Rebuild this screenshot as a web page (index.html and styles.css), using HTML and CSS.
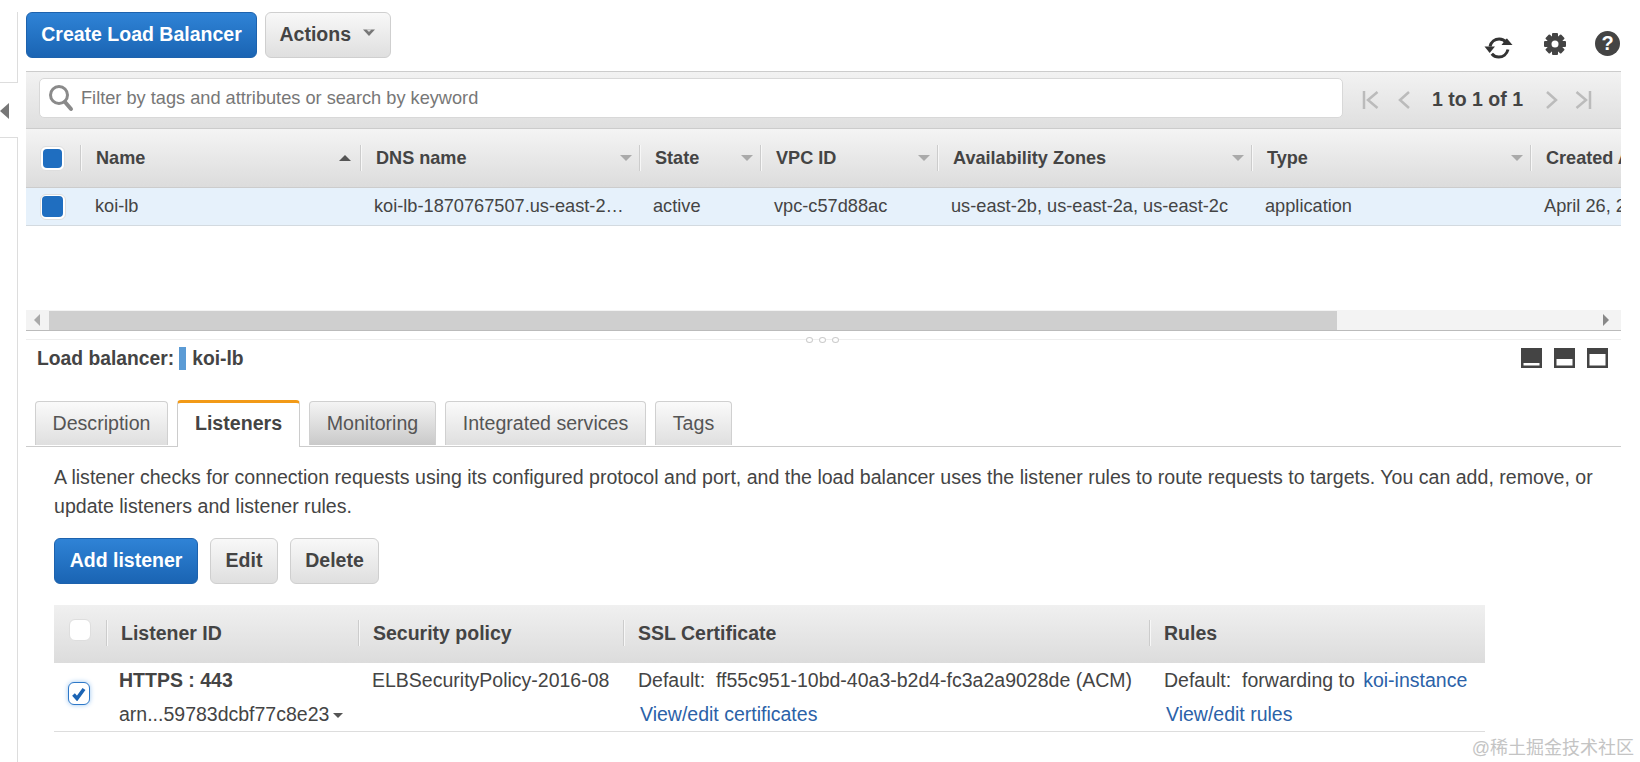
FILE: index.html
```html
<!DOCTYPE html>
<html lang="en">
<head>
<meta charset="utf-8">
<title>Load Balancers</title>
<link rel="stylesheet" href="styles.css">
</head>
<body>
<div class="page">
  <aside class="rail">
    <div class="rail-top"></div>
    <div class="rail-toggle"><span class="rail-arrow"></span></div>
    <div class="rail-bottom"></div>
  </aside>
  <main class="main">
    <div class="topbar">
      <div class="btn-row">
        <button class="btn btn-primary btn-create">Create Load Balancer</button>
        <button class="btn btn-actions">Actions
          <svg class="caret" width="14" height="9" viewBox="0 0 14 9"><path d="M1 1.500h12L7 8z" fill="#777"/><path d="M4.500 1.500h5L7 4z" fill="#ddd"/></svg>
        </button>
      </div>
      <div class="tools">
        <svg class="tool-refresh" width="30" height="26" viewBox="0 0 30 26">
          <path d="M6 11.500C7.200 6.800 11 4 15.200 4c3 0 5.400 1.300 7 3.300" fill="none" stroke="#333" stroke-width="3"/>
          <path d="M18.500 10h11L24 3.500 23 4z" fill="#333" transform="translate(-1 0)"/>
          <path d="M24 14.500C22.800 19.200 19 22 14.800 22c-3 0-5.400-1.300-7-3.300" fill="none" stroke="#333" stroke-width="3"/>
          <path d="M0.500 11.500h10.500L5.700 18z" fill="#333"/>
        </svg>
        <svg class="tool-gear" width="24" height="24" viewBox="0 0 24 24">
          <g fill="#444">
            <circle cx="12" cy="12" r="8"/>
            <rect x="9" y="1" width="6" height="22" rx="1"/>
            <rect x="9" y="1" width="6" height="22" rx="1" transform="rotate(45 12 12)"/>
            <rect x="9" y="1" width="6" height="22" rx="1" transform="rotate(90 12 12)"/>
            <rect x="9" y="1" width="6" height="22" rx="1" transform="rotate(135 12 12)"/>
          </g>
          <circle cx="12" cy="12" r="3.500" fill="#fff"/>
        </svg>
        <span class="tool-help">?</span>
      </div>
    </div>

    <div class="toolbar">
      <div class="search">
        <svg class="search-icon" width="26" height="28" viewBox="0 0 26 28">
          <circle cx="11" cy="11" r="8.500" fill="#fff" stroke="#8a8a8a" stroke-width="3"/>
          <path d="M17 18l6 7" stroke="#8a8a8a" stroke-width="4" stroke-linecap="round"/>
        </svg>
        <span class="placeholder">Filter by tags and attributes or search by keyword</span>
      </div>
      <div class="pager">
        <svg class="pg pg-first" width="18" height="20" viewBox="0 0 18 20"><path d="M2 1v18M15.500 2L6 10l9.500 8" fill="none" stroke="#bbb" stroke-width="2.500"/></svg>
        <svg class="pg pg-prev" width="14" height="20" viewBox="0 0 14 20"><path d="M12 2L3 10l9 8" fill="none" stroke="#bbb" stroke-width="2.500"/></svg>
        <span class="pg-text">1 to 1 of 1</span>
        <svg class="pg pg-next" width="14" height="20" viewBox="0 0 14 20"><path d="M2 2l9 8-9 8" fill="none" stroke="#bbb" stroke-width="2.500"/></svg>
        <svg class="pg pg-last" width="18" height="20" viewBox="0 0 18 20"><path d="M16 1v18M2.500 2L12 10l-9.500 8" fill="none" stroke="#bbb" stroke-width="2.500"/></svg>
      </div>
    </div>

    <div class="lb-table">
      <div class="lb-grid lb-head">
        <div class="cell-check"><span class="check check-fill"><i></i></span></div>
        <div class="hcell"><span>Name</span><b class="sort sort-up"></b></div>
        <div class="hcell"><span>DNS name</span><b class="sort"></b></div>
        <div class="hcell"><span>State</span><b class="sort"></b></div>
        <div class="hcell"><span>VPC ID</span><b class="sort"></b></div>
        <div class="hcell"><span>Availability Zones</span><b class="sort"></b></div>
        <div class="hcell"><span>Type</span><b class="sort"></b></div>
        <div class="hcell"><span>Created At</span></div>
      </div>
      <div class="lb-grid lb-row">
        <div class="cell-check"><span class="check check-fill check-row"><i></i></span></div>
        <div class="rcell rcell-name">koi-lb</div>
        <div class="rcell">koi-lb-1870767507.us-east-2…</div>
        <div class="rcell">active</div>
        <div class="rcell">vpc-c57d88ac</div>
        <div class="rcell">us-east-2b, us-east-2a, us-east-2c</div>
        <div class="rcell">application</div>
        <div class="rcell">April 26, 2018</div>
      </div>
      <div class="lb-empty"></div>
      <div class="hscroll">
        <span class="hs-left"></span>
        <span class="hs-thumb"></span>
        <span class="hs-track"></span>
        <span class="hs-right"></span>
      </div>
    </div>

    <section class="detail">
      <div class="detail-bar">
        <span class="dots"><i></i><i></i><i></i></span>
        <div class="lb-title">Load balancer:<span class="lb-mark"></span>koi-lb</div>
        <div class="panes">
          <svg width="21" height="20" viewBox="0 0 21 20"><rect width="21" height="20" fill="#444"/><rect x="2.500" y="15" width="16" height="2.500" fill="#fff"/></svg>
          <svg width="21" height="20" viewBox="0 0 21 20"><rect width="21" height="20" fill="#444"/><rect x="2.500" y="11" width="16" height="6.500" fill="#fff"/></svg>
          <svg width="21" height="20" viewBox="0 0 21 20"><rect width="21" height="20" fill="#444"/><rect x="2.500" y="6" width="16" height="11.500" fill="#fff"/></svg>
        </div>
      </div>

      <nav class="tabs">
        <span class="tab tab-description">Description</span>
        <span class="tab tab-active">Listeners</span>
        <span class="tab tab-dark tab-monitoring">Monitoring</span>
        <span class="tab tab-integrated">Integrated services</span>
        <span class="tab tab-tags">Tags</span>
      </nav>

      <div class="pane">
        <p class="intro">A listener checks for connection requests using its configured protocol and port, and the load balancer uses the listener rules to route requests to targets. You can add, remove, or update listeners and listener rules.</p>
        <div class="btn-row btn-row-pane">
          <button class="btn btn-primary btn-add">Add listener</button>
          <button class="btn btn-edit">Edit</button>
          <button class="btn btn-delete">Delete</button>
        </div>
        <div class="ls-table">
          <div class="ls-grid ls-head">
            <div class="ls-check"><span class="check"></span></div>
            <div class="ls-hcell">Listener ID</div>
            <div class="ls-hcell">Security policy</div>
            <div class="ls-hcell">SSL Certificate</div>
            <div class="ls-hcell">Rules</div>
          </div>
          <div class="ls-grid ls-row">
            <div class="ls-check ls-check-row">
              <span class="check check-on">
                <svg width="16" height="14" viewBox="0 0 16 14"><path d="M2.500 7.500l3.500 4 7-9.500" fill="none" stroke="#1c64b4" stroke-width="3.600"/></svg>
              </span>
            </div>
            <div class="ls-cell">
              <div class="ls-line ls-strong">HTTPS : 443</div>
              <div class="ls-line">arn...59783dcbf77c8e23<b class="arn-caret"></b></div>
            </div>
            <div class="ls-cell ls-cell-policy">
              <div class="ls-line">ELBSecurityPolicy-2016-08</div>
            </div>
            <div class="ls-cell ls-cell-cert">
              <div class="ls-line">Default:&nbsp; ff55c951-10bd-40a3-b2d4-fc3a2a9028de (ACM)</div>
              <div class="ls-line ls-link-line"><a class="link">View/edit certificates</a></div>
            </div>
            <div class="ls-cell ls-cell-rules">
              <div class="ls-line">Default:&nbsp; forwarding to <a class="link link-gap">koi-instance</a></div>
              <div class="ls-line ls-link-line"><a class="link">View/edit rules</a></div>
            </div>
          </div>
        </div>
      </div>
    </section>
  </main>
  <div class="watermark">@稀土掘金技术社区</div>
</div>
</body>
</html>
```
FILE: styles.css
```css
* { box-sizing: border-box; }
html, body { margin: 0; padding: 0; background: #fff; }
body {
  font-family: "Liberation Sans", Arial, "Noto Sans CJK SC", sans-serif;
  font-size: 18px;
  color: #444;
}
.page {
  position: relative;
  display: flex;
  width: 1640px;
  height: 762px;
  overflow: hidden;
}

/* left rail */
.rail { width: 18px; flex: none; display: flex; flex-direction: column; padding-top: 12px; }
.rail-top { height: 71px; border-right: 1px solid #ddd; border-bottom: 1px solid #ddd; }
.rail-toggle { height: 54px; display: flex; align-items: center; }
.rail-arrow {
  width: 0; height: 0;
  border-style: solid;
  border-width: 8px 9px 8px 0;
  border-color: transparent #777 transparent transparent;
  margin-top: 2px;
}
.rail-bottom { flex: 1; border-right: 1px solid #ddd; border-top: 1px solid #ddd; }

.main { width: 1595px; margin-left: 8px; flex: none; padding-top: 12px; }

/* buttons */
.topbar { display: flex; justify-content: space-between; height: 46px; }
.btn-row { display: flex; gap: 8px; }
.btn {
  height: 46px;
  padding: 0 0 2px;
  border: 1px solid #cfcfcf;
  border-radius: 6px;
  background: linear-gradient(#f8f8f8, #dfdfdf);
  font: bold 19.500px "Liberation Sans", Arial, sans-serif;
  color: #444;
  text-align: center;
}
.btn-primary {
  border-color: #1d62ad;
  background: linear-gradient(#2f83d6, #1a64b3);
  color: #fff;
}
.btn-create { width: 231px; }
.btn-actions { width: 126px; }
.caret { margin-left: 6px; vertical-align: 4px; }

.tools { display: flex; align-items: center; height: 66px; }
.tool-refresh { margin-right: 29px; margin-top: 6px; }
.tool-gear { margin-right: 28px; margin-top: -3px; }
.tool-help {
  width: 25px; height: 25px;
  margin-right: 1px; margin-top: -3px;
  border-radius: 50%;
  background: #444;
  color: #fff;
  font-weight: bold;
  font-size: 20px;
  line-height: 25px;
  text-align: center;
}

/* filter bar */
.toolbar {
  display: flex;
  height: 58px;
  margin-top: 13px;
  padding: 6px 0 0 13px;
  background: linear-gradient(#f2f2f2, #dfdfdf);
  border-top: 1px solid #ccc;
  border-bottom: 1px solid #ccc;
}
.search {
  display: flex;
  align-items: center;
  width: 1304px;
  height: 40px;
  padding-left: 8px;
  background: #fff;
  border: 1px solid #d8d8d8;
  border-radius: 5px;
}
.search-icon { flex: none; }
.placeholder { margin-left: 7px; color: #777; font-size: 18.200px; }
.pager { display: flex; align-items: center; height: 43px; margin-left: 19px; }
.pg { flex: none; }
.pg-prev { margin-left: 17px; }
.pg-text { width: 90px; margin: 0 23px 0 21px; font-weight: bold; font-size: 19.500px; white-space: nowrap; color: #444; }
.pg-last { margin-left: 15px; }

/* load balancer table */
.lb-table { width: 100%; overflow: hidden; }
.lb-grid { display: grid; grid-template-columns: 54px 280px 279px 121px 177px 314px 279px 200px; width: 1704px; }
.lb-head { height: 59px; background: linear-gradient(#f4f4f4, #dcdcdc); align-items: center; border-bottom: 1px solid #ccc; }
.cell-check { display: flex; justify-content: center; padding-right: 1px; }
.check {
  display: inline-flex;
  align-items: center;
  justify-content: center;
  width: 25px;
  height: 25px;
  background: #fff;
  border: 1px solid #dedede;
  border-radius: 6px;
}
.check-fill i { display: block; width: 19px; height: 19px; background: #1f6ec0; border-radius: 4px; }
.check-row { width: 26px; height: 26px; }
.check-row i { width: 21px; height: 21px; }
.hcell {
  display: flex;
  align-items: center;
  height: 26px;
  padding: 0 7px 0 15px;
  border-left: 1px solid #ccc;
  box-shadow: inset 1px 0 0 #f7f7f7;
  font-weight: bold;
  font-size: 18.100px;
  white-space: nowrap;
  color: #444;
}
.sort {
  margin-left: auto;
  width: 0; height: 0;
  border-style: solid;
  border-width: 6px 6px 0 6px;
  border-color: #aaa transparent transparent transparent;
}
.sort-up { margin-right: 2px; border-width: 0 6px 6px 6px; border-color: transparent transparent #555 transparent; }
.lb-row { height: 38px; background: #e6f1fb; align-items: center; border-bottom: 1px solid #d3dae0; }
.rcell {
  padding-left: 14px;
  white-space: nowrap;
  font-size: 18.200px;
  color: #444;
}
.rcell-name { padding-left: 15px; }
.lb-empty { height: 84px; }
.hscroll { display: flex; height: 21px; background: #f3f3f3; border-bottom: 1px solid #bbb; align-items: stretch; }
.hs-left { width: 23px; display: flex; align-items: center; padding-left: 8px; }
.hs-left::before {
  content: "";
  border-style: solid;
  border-width: 6px 6px 6px 0;
  border-color: transparent #aaa transparent transparent;
}
.hs-thumb { width: 1288px; margin-top: 1px; background: #cfcfcf; }
.hs-track { flex: 1; }
.hs-right { width: 18px; display: flex; align-items: center; }
.hs-right::before {
  content: "";
  border-style: solid;
  border-width: 6px 0 6px 6px;
  border-color: transparent transparent transparent #888;
}

/* detail panel */
.detail-bar {
  position: relative;
  display: flex;
  justify-content: space-between;
  height: 62px;
  margin-top: 8px;
  padding: 8px 13px 0 11px;
  border-top: 1px solid #eee;
}
.dots { position: absolute; top: -3px; left: 780px; display: flex; gap: 6px; }
.dots i { display: block; width: 7px; height: 6px; border: 1px solid #ccc; border-radius: 50%; background: #fff; }
.lb-title { display: flex; align-items: flex-start; font-weight: bold; font-size: 19.300px; line-height: 20px; height: 24px; padding-top: 1px; color: #444; }
.lb-mark { width: 7px; height: 23px; margin: -2px 6px 0 5px; background: #5b9bd5; }
.panes { display: flex; gap: 12px; height: 20px; }

.tabs { display: flex; gap: 9px; align-items: flex-end; height: 46px; padding-left: 9px; border-bottom: 1px solid #ccc; }
.tab {
  display: flex;
  align-items: center;
  justify-content: center;
  height: 44px;
  margin-bottom: 1px;
  padding-bottom: 1px;
  background: linear-gradient(#fafafa, #dfdfdf);
  border: 1px solid #d0d0d0;
  border-bottom: none;
  border-radius: 4px 4px 0 0;
  font-size: 19.600px;
  color: #555;
}
.tab-description { width: 133px; }
.tab-active {
  width: 123px;
  height: 47px;
  margin-bottom: -1px;
  padding-bottom: 4px;
  background: #fff;
  border-color: #ccc;
  border-top: 3px solid #f29a17;
  font-weight: bold;
  color: #444;
}
.tab-monitoring { width: 127px; }
.tab-dark { background: linear-gradient(#f4f4f4, #c9c9c9); }
.tab-integrated { width: 201px; }
.tab-tags { width: 77px; }

.pane { padding: 16px 0 0 28px; }
.intro { margin: 0; width: 1555px; font-size: 19.570px; line-height: 29px; color: #444; }
.btn-row-pane { gap: 12px; margin-top: 17px; }
.btn-add { width: 144px; }
.btn-edit { width: 68px; }
.btn-delete { width: 89px; }

.ls-table { width: 1431px; margin-top: 21px; }
.ls-grid { display: grid; grid-template-columns: 52px 252px 265px 526px 336px; }
.ls-head { height: 58px; align-items: center; background: linear-gradient(#f0f0f0, #dcdcdc); }
.ls-check { display: flex; justify-content: center; padding-right: 1px; }
.ls-head .check { width: 22px; height: 22px; margin-top: -9px; }
.ls-hcell {
  display: flex;
  align-items: center;
  height: 26px;
  margin-top: -2px;
  padding-left: 14px;
  border-left: 1px solid #ccc;
  box-shadow: inset 1px 0 0 #f7f7f7;
  font-weight: bold;
  font-size: 19.500px;
  color: #444;
}
.ls-row { height: 69px; border-bottom: 1px solid #ddd; }
.ls-check-row { align-items: flex-start; padding-top: 19px; padding-right: 3px; }
.check-on {
  width: 22px;
  height: 23px;
  border: 1.500px solid #2d78c8;
  box-shadow: 0 0 5px #9cc6f0;
}
.ls-cell { padding: 2px 0 0 13px; }
.ls-cell-policy { padding-left: 14px; }
.ls-cell-cert { padding-left: 15px; }
.ls-cell-rules { padding-left: 15px; }
.ls-line { height: 34px; line-height: 30px; font-size: 19.500px; white-space: nowrap; color: #444; }
.ls-strong { font-weight: bold; }
.ls-link-line { padding-left: 2px; }
.link { color: #2b62a8; }
.link-gap { margin-left: 3px; }
.arn-caret {
  display: inline-block;
  width: 0; height: 0;
  margin-left: 4px;
  vertical-align: 3px;
  border-style: solid;
  border-width: 5px 5px 0 5px;
  border-color: #555 transparent transparent transparent;
}

.watermark {
  position: absolute;
  right: 6px;
  top: 737px;
  font-size: 18px;
  line-height: 22px;
  color: #c4c4c4;
  white-space: nowrap;
}
```
